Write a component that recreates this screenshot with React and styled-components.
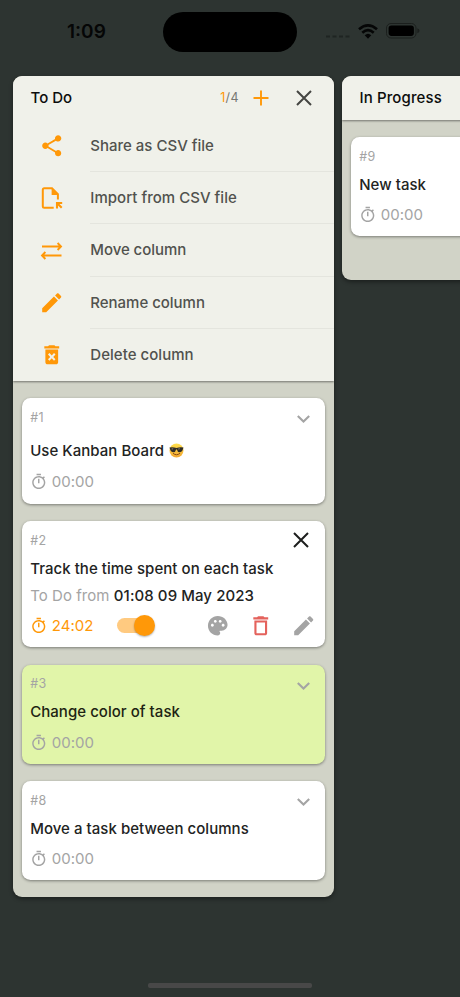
import React from 'react';
import styled, { createGlobalStyle } from 'styled-components';

const orange = '#ff9808';
const grey = '#a4a4a4';

const GlobalStyle = createGlobalStyle`
  * { box-sizing: border-box; }
  html, body { margin: 0; background: #2d3431; overflow: hidden; }
  body { font-family: Inter, "Noto Sans", sans-serif; }
`;

const Screen = styled.main`
  width: 460px;
  height: 997px;
  display: flex;
  flex-direction: column;
  overflow: hidden;
  background: #2d3431;
`;

const StatusBar = styled.header`
  height: 76px;
  flex: none;
  display: grid;
  grid-template-columns: 163px 134px 1fr;
  padding-top: 12px;
`;

const Clock = styled.time`
  height: 40px;
  padding-left: 67px;
  font-size: 19px;
  font-weight: 600;
  line-height: 40px;
  letter-spacing: 0;
  color: #050606;
`;

const Island = styled.div`
  height: 40px;
  border-radius: 20px;
  background: #000;
`;

const StatusIcons = styled.div`
  height: 38px;
  display: flex;
  align-items: center;
  padding-left: 29px;
`;

const Board = styled.div`
  flex: 1;
  display: flex;
  align-items: flex-start;
  gap: 8.5px;
  padding-left: 13px;
`;

const ColumnBox = styled.section`
  flex: none;
  width: 320.5px;
  border-radius: 9px;
  overflow: hidden;
  background: #d1d3c7;
  box-shadow: 0 2px 4px rgba(0, 0, 0, 0.4);
`;

const ColumnTop = styled.div`
  position: relative;
  background: #f0f1ea;
  box-shadow: 0 1px 2px rgba(0, 0, 0, 0.45);
`;

const ColumnHeader = styled.div`
  display: flex;
  align-items: center;
  height: ${(p) => p.$height}px;
  padding: 0 19px 0 17.5px;
`;

const ColumnTitle = styled.h2`
  flex: 1;
  margin: 0;
  font-size: 15px;
  font-weight: 500;
  line-height: 20px;
  letter-spacing: ${(p) => p.$track}px;
  color: #0c0d0c;
`;

const Count = styled.span`
  font-size: 12.5px;
  letter-spacing: 0.4px;
  color: #777873;
  margin-right: 10.5px;
`;

const CountNow = styled.span`
  color: ${orange};
`;

const IconButton = styled.button`
  display: flex;
  align-items: center;
  justify-content: center;
  width: ${(p) => p.$w || 22}px;
  height: 22px;
  margin: 0 0 0 ${(p) => p.$ml || 0}px;
  padding: ${(p) => p.$drop || 0}px 0 0;
  border: 0;
  background: none;
  color: ${(p) => p.$color};
`;

const Menu = styled.ul`
  list-style: none;
  margin: 0;
  padding: 0.8px 0 0;
`;

const MenuItem = styled.li`
  display: flex;
  align-items: stretch;
  height: 52.3px;
  padding-left: 26px;
`;

const MenuIcon = styled.span`
  width: 51.3px;
  display: flex;
  align-items: center;
  color: ${orange};
`;

const MenuLabel = styled.span`
  flex: 1;
  font-size: 15px;
  font-weight: 500;
  line-height: 51.8px;
  letter-spacing: ${(p) => p.$track}px;
  color: #51524e;
  border-bottom: ${(p) => (p.$last ? '0' : '1px solid #e4e5de')};
`;

const Cards = styled.div`
  display: flex;
  flex-direction: column;
  gap: 17.3px;
  padding: 17px 8.7px ${(p) => p.$bottom || 16.5}px;
`;

const CardBox = styled.article`
  height: ${(p) => p.$height}px;
  padding: 8px 10.5px 0 8.5px;
  border-radius: 8.5px;
  background: ${(p) => p.$bg};
  box-shadow: 0 1px 3px rgba(0, 0, 0, 0.42);
`;

const Row = styled.div`
  display: flex;
  align-items: center;
  height: 22px;
  margin-top: ${(p) => p.$gap || 0}px;
`;

const CardId = styled.span`
  flex: 1;
  font-size: 12.5px;
  letter-spacing: 0.3px;
  color: ${grey};
`;

const CardTitle = styled.h3`
  margin: 0;
  font-size: 15px;
  font-weight: 500;
  line-height: 22px;
  letter-spacing: ${(p) => p.$track}px;
  white-space: nowrap;
  color: ${(p) => p.$color || '#222322'};
`;

const Since = styled.span`
  font-size: 15px;
  letter-spacing: 0.05px;
  white-space: pre;
  color: ${grey};
`;

const SinceDate = styled.span`
  font-weight: 500;
  letter-spacing: 0.08px;
  color: #222322;
`;

const Timer = styled.span`
  flex: 1;
  display: flex;
  align-items: center;
  gap: 4px;
  font-size: 15px;
  letter-spacing: 0.05px;
  color: ${(p) => p.$color};
`;

const Switch = styled.span`
  display: flex;
  justify-content: flex-end;
  align-items: center;
  width: 35px;
  height: 15px;
  margin-left: 19.2px;
  border-radius: 8px;
  background: #ffca80;
`;

const Knob = styled.span`
  flex: none;
  width: 21.5px;
  height: 21.5px;
  margin-right: -3.5px;
  border-radius: 50%;
  background: ${orange};
  box-shadow: 0 1px 2px rgba(0, 0, 0, 0.3);
`;

const HomeBar = styled.div`
  flex: none;
  align-self: center;
  width: 164px;
  height: 5px;
  margin-bottom: 9px;
  border-radius: 2px;
  background: #484848;
`;

const Svg = styled.svg`
  display: block;
  flex: none;
  overflow: visible;
`;

const paths = {
  share: 'M18 16.08c-.76 0-1.44.3-1.96.77L8.91 12.7c.05-.23.09-.46.09-.7s-.04-.47-.09-.7l7.05-4.11c.54.5 1.25.81 2.04.81 1.66 0 3-1.34 3-3s-1.34-3-3-3-3 1.34-3 3c0 .24.04.47.09.7L8.04 9.81C7.5 9.31 6.79 9 6 9c-1.66 0-3 1.34-3 3s1.34 3 3 3c.79 0 1.5-.31 2.04-.81l7.12 4.16c-.05.21-.08.43-.08.65 0 1.61 1.31 2.92 2.92 2.92 1.61 0 2.92-1.31 2.92-2.92s-1.31-2.92-2.92-2.92z',
  pencil: 'M3 17.25V21h3.75L17.81 9.94l-3.75-3.75L3 17.25zM20.71 7.04c.39-.39.39-1.02 0-1.41l-2.34-2.34c-.39-.39-1.02-.39-1.41 0l-1.83 1.83 3.75 3.75 1.83-1.83z',
  remove: 'M6 19c0 1.1.9 2 2 2h8c1.1 0 2-.9 2-2V7H6v12zm2.46-7.12l1.41-1.41L12 12.59l2.12-2.12 1.41 1.41L13.41 14l2.12 2.12-1.41 1.41L12 15.41l-2.12 2.12-1.41-1.41L10.59 14l-2.13-2.12zM15.5 4l-1-1h-5l-1 1H5v2h14V4z',
  trash: 'M6 19c0 1.1.9 2 2 2h8c1.1 0 2-.9 2-2V7H6v12zM8 9h8v10H8V9zm7.5-5l-1-1h-5l-1 1H5v2h14V4z',
  timer: 'M15 1H9v2h6V1zm-4 13h2V8h-2v6zm8.03-6.61l1.42-1.42c-.43-.51-.9-.99-1.41-1.41l-1.42 1.42C16.07 4.74 14.12 4 12 4c-4.97 0-9 4.03-9 9s4.02 9 9 9 9-4.03 9-9c0-2.12-.74-4.07-1.97-5.61zM12 20c-3.87 0-7-3.13-7-7s3.13-7 7-7 7 3.13 7 7-3.13 7-7 7z',
  palette: 'M12 2C6.49 2 2 6.49 2 12s4.49 10 10 10c1.38 0 2.5-1.12 2.5-2.5 0-.61-.23-1.2-.64-1.67-.08-.1-.13-.21-.13-.33 0-.28.22-.5.5-.5H16c3.31 0 6-2.69 6-6 0-4.96-4.49-9-10-9zm5.5 11c-.83 0-1.5-.67-1.5-1.5s.67-1.5 1.5-1.5 1.5.67 1.5 1.5-.67 1.5-1.5 1.5zm-3-4c-.83 0-1.5-.67-1.5-1.5S13.67 6 14.5 6s1.5.67 1.5 1.5S15.33 9 14.5 9zM5 11.5c0-.83.67-1.5 1.5-1.5s1.5.67 1.5 1.5S7.33 13 6.5 13 5 12.33 5 11.5zm6-4c0 .83-.67 1.5-1.5 1.5S8 8.33 8 7.5 8.67 6 9.5 6s1.5.67 1.5 1.5z',
};

function Glyph({ name, size }) {
  return (
    <Svg width={size} height={size} viewBox="0 0 24 24" fill="currentColor">
      <path d={paths[name]} />
    </Svg>
  );
}

const Cross = () => (
  <Svg width="16" height="16" viewBox="0 0 16 16" fill="none" stroke="currentColor" strokeWidth="2">
    <path d="M1 1L15 15M15 1L1 15" />
  </Svg>
);

const Plus = () => (
  <Svg width="16" height="16" viewBox="0 0 16 16" fill="none" stroke="currentColor" strokeWidth="1.9">
    <path d="M8 .5V15.5M.5 8H15.5" />
  </Svg>
);

const Chevron = () => (
  <Svg width="13" height="8" viewBox="0 0 13 8" fill="none" stroke="currentColor" strokeWidth="2.1">
    <path d="M.8 1L6.5 6.6L12.2 1" />
  </Svg>
);

const ImportFile = () => (
  <Svg width="24" height="24" viewBox="0 0 24 24" fill="none" stroke="currentColor" strokeWidth="2">
    <path d="M14.7 21.7H5.3Q3.8 21.7 3.8 20.2V3.8Q3.8 2.3 5.3 2.3H13L18.9 8.2V13.5" />
    <path d="M12.6 2.5V9H18.8Z" fill="currentColor" stroke="none" />
    <path d="M18 22.4V17H23.2M18 17L22.7 21.8" strokeWidth="2.1" />
  </Svg>
);

const Arrows = () => (
  <Svg width="24" height="20" viewBox="0 0 24 20" fill="none" stroke="currentColor" strokeWidth="1.9">
    <path d="M3 5.5H22M18.6 2L22 5.5L18.6 9M22.5 14.5H3M6.4 11L3 14.5L6.4 18" />
  </Svg>
);

const Sunglasses = () => (
  <Svg width="15" height="15" viewBox="0 0 30 30" role="img" aria-label="😎">
    <defs>
      <linearGradient id="face" x1="0" y1="0" x2="0" y2="1">
        <stop offset="0" stopColor="#ffe04e" />
        <stop offset="1" stopColor="#f3a72f" />
      </linearGradient>
    </defs>
    <circle cx="15" cy="15" r="14" fill="url(#face)" />
    <path d="M1 9Q8 7.5 15 10Q22 7.5 29 9L28 12Q26 18.5 21 18.5Q17 18.5 15.8 13H14.2Q13 18.5 9 18.5Q4 18.5 2 12Z" fill="#2f2c28" />
    <path d="M5 11L9 10.5L6 14ZM18.5 11L22.5 10.5L19.5 14Z" fill="#8c8372" />
    <path d="M8.5 21Q15 26.5 21.5 21" fill="none" stroke="#8a4b16" strokeWidth="2" strokeLinecap="round" />
  </Svg>
);

const TitleEmoji = styled.span`
  margin-left: 4.5px;
`;

const Wifi = styled(Svg)`
  margin-left: 8px;
`;

const Battery = styled(Svg)`
  margin-left: 8px;
`;

function Card({ id, title, height = 99.3, bg = '#fff', color, gap = 6.5, timeGap = 8.3, track = 0.04, emoji }) {
  return (
    <CardBox $height={height} $bg={bg}>
      <Row>
        <CardId>{id}</CardId>
        <IconButton $color={grey} $drop={4}><Chevron /></IconButton>
      </Row>
      <Row $gap={gap}>
        <CardTitle $track={track} $color={color}>{title}</CardTitle>
        {emoji && <TitleEmoji><Sunglasses /></TitleEmoji>}
      </Row>
      <Row $gap={timeGap}>
        <Timer $color={grey}><Glyph name="timer" size={17.5} />00:00</Timer>
      </Row>
    </CardBox>
  );
}

function ActiveCard() {
  return (
    <CardBox $height={126.2} $bg="#fff">
      <Row>
        <CardId>#2</CardId>
        <IconButton $w={26} $color="#1d1e1d"><Cross /></IconButton>
      </Row>
      <Row $gap={6.5}>
        <CardTitle $track={0.04}>Track the time spent on each task</CardTitle>
      </Row>
      <Row $gap={4.5}>
        <Since>To Do from <SinceDate>01:08 09 May 2023</SinceDate></Since>
      </Row>
      <Row $gap={8.5}>
        <Timer $color={orange}>
          <Glyph name="timer" size={17.5} />24:02
          <Switch><Knob /></Switch>
        </Timer>
        <IconButton $color={grey}><Glyph name="palette" size={23.5} /></IconButton>
        <IconButton $color="#e4625c" $ml={21}><Glyph name="trash" size={25.5} /></IconButton>
        <IconButton $color={grey} $ml={20.5}><Glyph name="pencil" size={25.5} /></IconButton>
      </Row>
    </CardBox>
  );
}

const menu = [
  ['Share as CSV file', <Glyph name="share" size={25.5} />, 0],
  ['Import from CSV file', <ImportFile />, 0.03],
  ['Move column', <Arrows />, -0.06],
  ['Rename column', <Glyph name="pencil" size={25.5} />, -0.02],
  ['Delete column', <Glyph name="remove" size={25.5} />, 0.04],
];

export default function App() {
  return (
    <Screen>
      <GlobalStyle />
      <StatusBar>
        <Clock>1:09</Clock>
        <Island />
        <StatusIcons>
          <Svg width="24" height="4" viewBox="0 0 24 4" transform="translate(0 5)" fill="#1f2422">
            <path d="M0 1.5h4v2H0zM6.5 1.5h4v2h-4zM13 1.5h4v2h-4zM19.5 1.5h4v2h-4z" />
          </Svg>
          <Wifi width="20" height="15" viewBox="0 0 20 15" fill="none" stroke="#050606" strokeWidth="2.7">
            <path d="M1 5.2Q10-2.5 19 5.2M4.3 8.7Q10 3.7 15.7 8.7" />
            <path d="M6.7 11.2Q10 8.2 13.3 11.2L10 14.7Z" fill="#050606" stroke="none" />
          </Wifi>
          <Battery width="34" height="16" viewBox="0 0 34 16">
            <rect x=".5" y=".5" width="29.5" height="14.5" rx="4.5" fill="none" stroke="#1b1f1d" />
            <rect x="2.6" y="2.6" width="25.3" height="10.3" rx="2.8" fill="#000" />
            <path d="M31.3 5.3Q33.5 6 33.5 7.8Q33.5 9.5 31.3 10.2Z" fill="#1b1f1d" />
          </Battery>
        </StatusIcons>
      </StatusBar>
      <Board>
        <ColumnBox>
          <ColumnTop>
            <ColumnHeader $height={43}>
              <ColumnTitle $track={0.02}>To Do</ColumnTitle>
              <Count><CountNow>1</CountNow>/4</Count>
              <IconButton $color={orange}><Plus /></IconButton>
              <IconButton $color="#454642" $ml={21}><Cross /></IconButton>
            </ColumnHeader>
            <Menu>
              {menu.map(([label, icon, track], i) => (
                <MenuItem key={label}>
                  <MenuIcon>{icon}</MenuIcon>
                  <MenuLabel $track={track} $last={i === menu.length - 1}>{label}</MenuLabel>
                </MenuItem>
              ))}
            </Menu>
          </ColumnTop>
          <Cards>
            <Card id="#1" title="Use Kanban Board" height={105.5} gap={11.5} timeGap={9.2} emoji />
            <ActiveCard />
            <Card id="#3" title="Change color of task" bg="#e1f5a9" color="#1d2412" />
            <Card id="#8" title="Move a task between columns" />
          </Cards>
        </ColumnBox>
        <ColumnBox>
          <ColumnTop>
            <ColumnHeader $height={44}>
              <ColumnTitle $track={0.12}>In Progress</ColumnTitle>
            </ColumnHeader>
          </ColumnTop>
          <Cards $bottom={44}>
            <Card id="#9" title="New task" />
          </Cards>
        </ColumnBox>
      </Board>
      <HomeBar />
    </Screen>
  );
}
